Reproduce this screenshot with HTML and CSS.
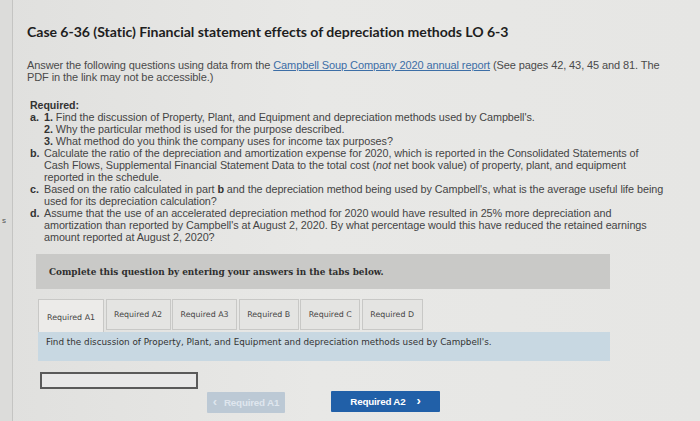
FILE: index.html
```html
<!DOCTYPE html>
<html>
<head>
<meta charset="utf-8">
<link rel="stylesheet" href="styles.css">
</head>
<body>
<div class="page">
  <aside class="side"><span class="side-s">s</span></aside>
  <main class="main">
    <h1 class="title">Case 6-36 (Static) Financial statement effects of depreciation methods LO 6-3</h1>
    <p class="intro">Answer the following questions using data from the <a class="link" href="#">Campbell Soup Company 2020 annual report</a> (See pages 42, 43, 45 and 81. The<br>PDF in the link may not be accessible.)</p>
    <div class="req">
      <div class="req-head">Required:</div>
      <div class="item"><span class="lbl">a.</span><div class="body">
        <div class="sub"><b>1.</b> Find the discussion of Property, Plant, and Equipment and depreciation methods used by Campbell's.</div>
        <div class="sub"><b>2.</b> Why the particular method is used for the purpose described.</div>
        <div class="sub"><b>3.</b> What method do you think the company uses for income tax purposes?</div>
      </div></div>
      <div class="item"><span class="lbl">b.</span><div class="body">Calculate the ratio of the depreciation and amortization expense for 2020, which is reported in the Consolidated Statements of<br>Cash Flows, Supplemental Financial Statement Data to the total cost (<i>not</i> net book value) of property, plant, and equipment<br>reported in the schedule.</div></div>
      <div class="item"><span class="lbl">c.</span><div class="body">Based on the ratio calculated in part <b>b</b> and the depreciation method being used by Campbell's, what is the average useful life being<br>used for its depreciation calculation?</div></div>
      <div class="item"><span class="lbl">d.</span><div class="body">Assume that the use of an accelerated depreciation method for 2020 would have resulted in 25% more depreciation and<br>amortization than reported by Campbell's at August 2, 2020. By what percentage would this have reduced the retained earnings<br>amount reported at August 2, 2020?</div></div>
    </div>
    <div class="question">
      <div class="complete">Complete this question by entering your answers in the tabs below.</div>
      <div class="tabs">
        <div class="tab active">Required A1</div>
        <div class="tab">Required A2</div>
        <div class="tab">Required A3</div>
        <div class="tab">Required B</div>
        <div class="tab">Required C</div>
        <div class="tab">Required D</div>
      </div>
      <div class="panel">Find the discussion of Property, Plant, and Equipment and depreciation methods used by Campbell's.</div>
      <div class="answer"></div>
      <div class="nav">
        <button class="btn prev"><span class="chev">&lsaquo;</span>Required A1</button>
        <button class="btn next">Required A2<span class="chev r">&rsaquo;</span></button>
      </div>
    </div>
  </main>
</div>
</body>
</html>
```
FILE: styles.css
```css
html, body {
  margin: 0;
  padding: 0;
}
body {
  width: 700px;
  height: 421px;
  overflow: hidden;
  background: #e3e3e1;
  font-family: "Liberation Sans", Arial, sans-serif;
  color: #3a3a3a;
}
.page {
  display: flex;
  height: 421px;
  background: linear-gradient(90deg, #e0e0de 0%, #e8e8e6 45%, #e6e6e4 100%);
}
.side {
  width: 12px;
  border-right: 1px solid #c4c4c2;
  background: #dcdcda;
  position: relative;
}
.side-s {
  position: absolute;
  left: 2px;
  top: 216px;
  font-size: 8px;
  color: #555;
}
.main {
  flex: 1;
  padding-left: 14px;
  padding-top: 22px;
}
.title {
  margin: 0;
  font-family: Lato, "Open Sans", sans-serif;
  font-weight: 700;
  font-size: 14.1px;
  line-height: 20px;
  color: #1e1e1e;
  letter-spacing: -0.05px;
}
.intro {
  margin: 18px 0 0 0;
  white-space: nowrap;
  font-family: "Liberation Sans", Arial, sans-serif;
  font-size: 11px;
  line-height: 11.5px;
  color: #4a4a4a;
  letter-spacing: -0.1px;
}
.link {
  color: #3c6ea6;
  text-decoration: underline;
}
.req {
  margin-top: 16px;
  padding-left: 3px;
  white-space: nowrap;
  font-family: "Liberation Sans", Arial, sans-serif;
  font-size: 10.8px;
  line-height: 12px;
  color: #444;
  letter-spacing: -0.05px;
}
.req-head {
  font-weight: 700;
  color: #333;
  font-size: 10.6px;
}
.item {
  display: flex;
}
.lbl {
  width: 14px;
  flex: none;
  font-weight: 700;
  color: #333;
}
.body b {
  color: #333;
}
.question {
  margin-top: 11px;
  margin-left: 9px;
  width: 574px;
}
.complete {
  height: 35px;
  display: flex;
  align-items: center;
  padding-left: 13px;
  background: #c9c9c7;
  font-family: "DejaVu Serif", Georgia, serif;
  font-weight: 700;
  font-size: 8.9px;
  color: #2e2e2e;
}
.tabs {
  display: flex;
  gap: 1.5px;
  margin-top: 10px;
  margin-left: 2px;
  height: 33px;
}
.tab {
  padding: 0 7.5px;
  display: flex;
  align-items: center;
  border: 1px solid #c8c8c6;
  background: #e4e4e2;
  font-family: "DejaVu Sans", Verdana, sans-serif;
  font-size: 7.9px;
  color: #444;
  box-sizing: border-box;
  height: 31px;
}
.tab.active {
  padding: 2px 8px 0;
  background: #ecebe9;
  border-bottom: none;
  height: 33px;
}
.panel {
  height: 29px;
  margin-left: 2px;
  padding: 5px 8px 0;
  box-sizing: border-box;
  background: #c8d8e2;
  font-family: "DejaVu Sans", Verdana, sans-serif;
  font-size: 8.8px;
  color: #333;
}
.answer {
  margin-top: 11px;
  margin-left: 4px;
  width: 154px;
  height: 13px;
  border: 2px solid #5a5a5a;
  background: #e8e8e8;
}
.nav {
  display: flex;
  gap: 46px;
  margin-left: 171px;
  margin-top: 2px;
}
.btn {
  height: 21px;
  border: none;
  border-radius: 1px;
  display: flex;
  align-items: center;
  justify-content: center;
  font-family: "Liberation Sans", Arial, sans-serif;
  font-weight: 700;
  font-size: 9.8px;
  letter-spacing: -0.2px;
  padding: 0;
}
.chev {
  font-size: 13px;
  margin-right: 7px;
  line-height: 1;
  position: relative;
  top: -1px;
}
.chev.r {
  margin: 0 0 0 11px;
}
.prev {
  width: 78px;
  background: #bcc9d5;
  color: #dfe6ee;
  margin-top: 1px;
}
.next {
  width: 109px;
  background: #2160a8;
  color: #fff;
}
```
